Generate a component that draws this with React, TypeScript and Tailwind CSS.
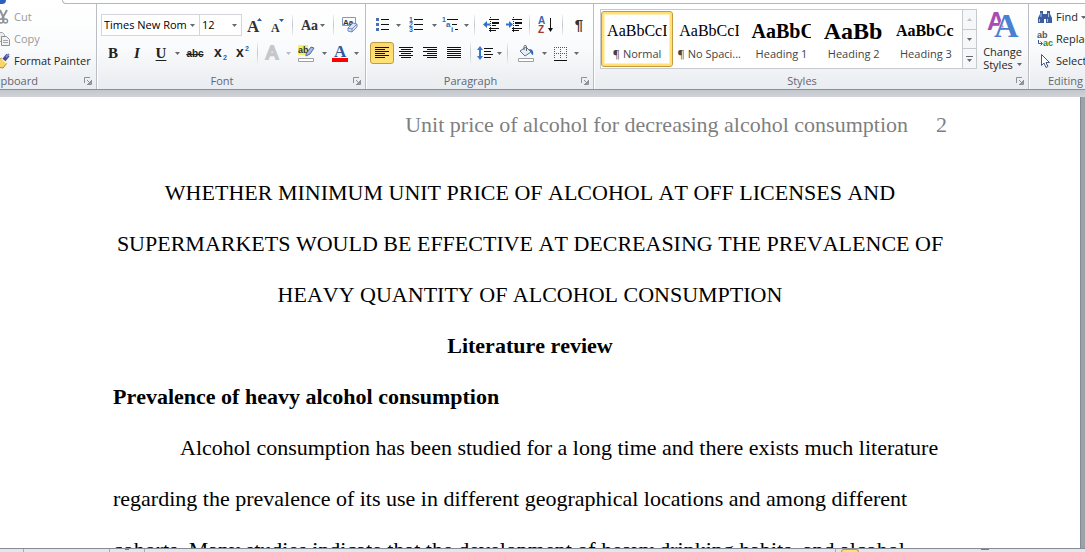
import React from 'react';
import clsx from 'clsx';

const Caret = ({ className }: { className?: string }) => (
    <svg width="5" height="3" viewBox="0 0 5 3" className={clsx('shrink-0', className ?? 'fill-[#666a70]')} aria-hidden="true">
        <path d="M0 0h5L2.5 3z" />
    </svg>
);

const Sep = () => <span className="mx-1 h-5 w-px shrink-0 bg-linear-to-b from-[#eceef1] via-[#c3c7cd] to-[#eceef1]" />;

interface ToolProps {
    label: string;
    width?: string;
    active?: boolean;
    children: React.ReactNode;
}

const Tool = ({ label, width = 'w-6', active, children }: ToolProps) => (
    <button
        aria-label={label}
        className={clsx(
            'flex h-[22px] shrink-0 items-center justify-center gap-0.5',
            width,
            active && 'rounded-[3px] border border-[#c29b3f] bg-linear-to-b from-[#fbd971] to-[#ffe375]'
        )}
    >
        {children}
    </button>
);

const Drop = ({ label, className }: { label: string; className?: string }) => (
    <button aria-label={label} className="flex h-[22px] w-2 shrink-0 items-center justify-center">
        <Caret className={className} />
    </button>
);

const Icon = ({ children }: { children: React.ReactNode }) => (
    <svg width="16" height="16" viewBox="0 0 16 16" className="shrink-0 overflow-visible" aria-hidden="true">
        {children}
    </svg>
);

interface GlyphProps {
    x: number;
    y: number;
    size: number;
    fill: string;
    serif?: boolean;
    children: string;
}

// small letter inside an icon
const Glyph = ({ x, y, size, fill, serif, children }: GlyphProps) => (
    <text
        x={x}
        y={y}
        fontSize={size}
        fontWeight="bold"
        fill={fill}
        className={serif ? "font-['Liberation_Serif',serif]" : "font-['Liberation_Sans',sans-serif]"}
    >
        {children}
    </text>
);

interface ComboProps {
    label: string;
    value: string;
    width: string;
}

const Combo = ({ label, value, width }: ComboProps) => (
    <div className={clsx('flex h-[22px] shrink-0 items-center border border-[#d3d6da] bg-white pr-1 pl-0.5', width)}>
        <select aria-label={label} className="min-w-0 flex-1 appearance-none overflow-hidden text-[11px] text-black">
            <option>{value}</option>
        </select>
        <Caret />
    </div>
);

interface GroupProps {
    name: string;
    launcher?: boolean;
    className?: string;
    labelClassName?: string;
    children: React.ReactNode;
}

const Group = ({ name, launcher = true, className, labelClassName = 'pr-1.5 text-center', children }: GroupProps) => (
    <section aria-label={name} className={clsx('flex flex-col border-r border-[#babdc3] shadow-[1px_0_0_white]', className)}>
        <div className="flex-1">{children}</div>
        <div className="flex h-4 items-center text-[11px] text-[#5f6775]">
            <span className={clsx('flex-1 whitespace-nowrap', labelClassName)}>{name}</span>
            {launcher && (
                <button aria-label={`${name} options`} className="mr-1">
                    <svg width="8" height="8" viewBox="0 0 8 8" fill="none" stroke="#8d9197" aria-hidden="true">
                        <path d="M.5 6V.5H6M3 3l3 3M7.5 3v4.5H3M6.5 4v2.500H4" />
                    </svg>
                </button>
            )}
        </div>
    </section>
);

const alignments = [
    { label: 'Align left', d: 'M1 2.500h14M1 4.500h10M1 6.500h14M1 8.500h10M1 10.500h14M1 12.500h10' },
    { label: 'Center', d: 'M1 2.500h14M3 4.500h10M1 6.500h14M3 8.500h10M1 10.500h14M3 12.500h10' },
    { label: 'Align right', d: 'M1 2.500h14M5 4.500h10M1 6.500h14M5 8.500h10M1 10.500h14M5 12.500h10' },
    { label: 'Justify', d: 'M1 2.500h14M1 4.500h14M1 6.500h14M1 8.500h14M1 10.500h14M1 12.500h14' },
];

const styles = [
    { name: '¶ Normal', sample: 'AaBbCcI', look: 'text-[16px]', active: true },
    { name: '¶ No Spaci...', sample: 'AaBbCcI', look: 'text-[16px]' },
    { name: 'Heading 1', sample: 'AaBbC', look: 'text-[20px] font-bold' },
    { name: 'Heading 2', sample: 'AaBb', look: 'text-[24px] font-bold' },
    { name: 'Heading 3', sample: 'AaBbCc', look: 'text-[16px] font-bold' },
];

const ClipboardGroup = () => (
    <Group name="Clipboard" className="w-[97px] shrink-0 overflow-hidden" labelClassName="-ml-3">
        <div className="-ml-1.5 pt-0.5 text-[11px] [&>button]:flex [&>button]:h-[22px] [&>button]:items-center [&>button]:gap-1 [&>button]:whitespace-nowrap">
            <button className="text-[#9a9a9a]">
                <Icon>
                    <path d="M6 1l4 9M13 1L8 10" stroke="#8f9399" strokeWidth="2" />
                    <circle cx="7" cy="12" r="2" fill="none" stroke="#8f9399" strokeWidth="1.500" />
                    <circle cx="11.500" cy="12" r="2" fill="none" stroke="#8f9399" strokeWidth="1.500" />
                </Icon>
                Cut
            </button>
            <button className="text-[#9a9a9a]">
                <Icon>
                    <path d="M2.500 1.500h6l2 2v7h-8z" fill="#ececec" stroke="#a4a6a9" />
                    <path d="M7.500 5.500h5l3 3v6h-8z" fill="#f2f2f2" stroke="#8c8f93" />
                    <path d="M9 9.500h5M9 11.500h5" stroke="#a4a6a9" />
                </Icon>
                Copy
            </button>
            <button className="text-[#262626]">
                <Icon>
                    <path d="M4 7l4-2 5 5-4 5-6-1z" fill="#f6d56b" stroke="#b58b2c" />
                    <path d="M8 5l5 5" stroke="#f9f2d8" strokeWidth="2" />
                    <path d="M10 7l4-5" stroke="#424d99" strokeWidth="4" />
                    <path d="M12 4l3-3" stroke="#7d86c2" strokeWidth="2" />
                </Icon>
                Format Painter
            </button>
        </div>
    </Group>
);

const FontGroup = () => (
    <Group name="Font" className="w-[269px] shrink-0">
        <div className="flex flex-col gap-1.5 pt-2.5 pl-1">
            <div className="flex items-center">
                <Combo label="Font" value="Times New Rom" width="w-[99px]" />
                <Combo label="Font size" value="12" width="w-[43px] -ml-px" />
                <Tool label="Grow font" width="w-[26px]">
                    <Icon>
                        <Glyph x={0} y={15} size={17} fill="#333" serif>A</Glyph>
                        <path d="M10 4h5l-2.500-3z" fill="#2c5aa8" />
                    </Icon>
                </Tool>
                <Tool label="Shrink font" width="w-5">
                    <Icon>
                        <Glyph x={1} y={15} size={12} fill="#333" serif>A</Glyph>
                        <path d="M9 2h5l-2.500 3z" fill="#2c5aa8" />
                    </Icon>
                </Tool>
                <Sep />
                <Tool label="Change case" width="w-8">
                    <span className="font-['Liberation_Serif',serif] text-[14px] font-bold text-[#333]">Aa</span>
                    <Caret />
                </Tool>
                <Sep />
                <Tool label="Clear formatting">
                    <Icon>
                        <path d="M.5 .5h13v8H.5z" fill="#f7faff" stroke="#7d9ac4" />
                        <Glyph x={1} y={7.5} size={8} fill="#333">Aa</Glyph>
                        <path d="M6 11l5-5 4 1v3l-5 5-4-1z" fill="#dbe5fa" stroke="#7088bd" />
                        <path d="M6 11l4 1 5-5M10 12v3" fill="none" stroke="#7088bd" />
                    </Icon>
                </Tool>
            </div>
            <div className="flex items-center font-['Liberation_Serif',serif] text-[15px] text-[#222]">
                <Tool label="Bold"><b>B</b></Tool>
                <Tool label="Italic"><b className="italic">I</b></Tool>
                <Tool label="Underline"><b className="underline underline-offset-2">U</b></Tool>
                <Drop label="Underline style" />
                <Tool label="Strikethrough" width="w-7">
                    <span className="font-['Liberation_Sans',sans-serif] text-[10px] font-bold line-through">abc</span>
                </Tool>
                <Tool label="Subscript">
                    <Icon>
                        <Glyph x={1} y={12} size={14} fill="#222">x</Glyph>
                        <Glyph x={10} y={15} size={7} fill="#2c5aa8">2</Glyph>
                    </Icon>
                </Tool>
                <Tool label="Superscript" width="w-5">
                    <Icon>
                        <Glyph x={1} y={12} size={14} fill="#222">x</Glyph>
                        <Glyph x={10} y={6} size={7} fill="#2c5aa8">2</Glyph>
                    </Icon>
                </Tool>
                <Sep />
                <Tool label="Text effects" width="w-[22px]">
                    <Icon>
                        <text
                            x="1"
                            y="14"
                            fontSize="18"
                            fill="#fff"
                            stroke="#c6c7cd"
                            strokeWidth="2"
                            className="font-['Liberation_Sans',sans-serif]"
                        >
                            A
                        </text>
                    </Icon>
                </Tool>
                <Drop label="Text effect options" className="fill-[#b8babd]" />
                <Tool label="Highlight" width="w-7">
                    <Icon>
                        <path d="M0 0h10v10H0z" fill="#f3f06a" />
                        <Glyph x={0} y={8} size={9} fill="#333">ab</Glyph>
                        <path d="M8 9l5-7 3 1-4 6-4 2z" fill="#a9bde0" stroke="#526ba0" />
                        <path d="M.5 13.500h15v3H.5z" fill="#fff" stroke="#9c9fa3" />
                    </Icon>
                </Tool>
                <Drop label="Highlight color" />
                <Tool label="Font color">
                    <Icon>
                        <Glyph x={2} y={12} size={17} fill="#31599b" serif>A</Glyph>
                        <path d="M0 13h16v4H0z" fill="#f00" />
                    </Icon>
                </Tool>
                <Drop label="Font color options" />
            </div>
        </div>
    </Group>
);

const ParagraphGroup = () => (
    <Group name="Paragraph" className="w-[228px] shrink-0">
        <div className="flex flex-col gap-1.5 pt-2.5 pl-1">
            <div className="flex items-center">
                <Tool label="Bullets">
                    <Icon>
                        <path d="M2 1h3v3H2zM2 6h3v3H2zM2 11h3v3H2z" fill="#4a6fb5" />
                        <path d="M7 2.500h8M7 7.500h8M7 12.500h8" stroke="#111" />
                    </Icon>
                </Tool>
                <Drop label="Bullet library" />
                <Tool label="Numbering" width="w-7">
                    <Icon>
                        <Glyph x={1} y={5} size={7} fill="#3864b4">1</Glyph>
                        <Glyph x={1} y={10} size={7} fill="#3864b4">2</Glyph>
                        <Glyph x={1} y={15} size={7} fill="#3864b4">3</Glyph>
                        <path d="M6 2.500h9M6 7.500h9M6 12.500h9" stroke="#111" />
                    </Icon>
                </Tool>
                <Drop label="Numbering library" />
                <Tool label="Multilevel list">
                    <Icon>
                        <Glyph x={0} y={5} size={7} fill="#3864b4">1</Glyph>
                        <Glyph x={4} y={10} size={8} fill="#3864b4">a</Glyph>
                        <Glyph x={9} y={15} size={8} fill="#3864b4">i</Glyph>
                        <path d="M5 2.500h11M10 7.500h5M13 12.500h3" stroke="#111" />
                    </Icon>
                </Tool>
                <Drop label="List library" />
                <Sep />
                <Tool label="Decrease indent">
                    <Icon>
                        <path d="M7.500 0v16" stroke="#333" strokeDasharray="1 1" />
                        <path d="M6 2.500h10M9 8.500h4M6 11.500h10M6 13.500h7" stroke="#111" />
                        <path d="M9 5h7v2H9z" fill="#111" />
                        <path d="M0 7.500L4 4v2.500h3v2H4V11z" fill="#2f6fce" />
                    </Icon>
                </Tool>
                <Tool label="Increase indent" width="w-[22px]">
                    <Icon>
                        <path d="M7.500 0v16" stroke="#333" strokeDasharray="1 1" />
                        <path d="M6 2.500h10M9 8.500h4M6 11.500h10M6 13.500h7" stroke="#111" />
                        <path d="M9 5h7v2H9z" fill="#111" />
                        <path d="M7 7.500L3 4v2.500H0v2h3V11z" fill="#2f6fce" />
                    </Icon>
                </Tool>
                <Sep />
                <Tool label="Sort">
                    <Icon>
                        <Glyph x={0} y={7} size={10} fill="#3864b4">A</Glyph>
                        <Glyph x={0} y={16} size={10} fill="#a03838">Z</Glyph>
                        <path d="M12.500 1v11" stroke="#111" />
                        <path d="M10 11h5l-2.500 4z" fill="#111" />
                    </Icon>
                </Tool>
                <Sep />
                <Tool label="Show marks">
                    <span className="font-['Liberation_Sans',sans-serif] text-[15px] font-bold text-[#333]">¶</span>
                </Tool>
            </div>
            <div className="flex items-center">
                {alignments.map((a, i) => (
                    <Tool key={a.label} label={a.label} active={i === 0}>
                        <Icon>
                            <path d={a.d} stroke="#111" />
                        </Icon>
                    </Tool>
                ))}
                <Sep />
                <Tool label="Line spacing" width="w-5">
                    <Icon>
                        <path d="M0 5l3-4 3 4H4v6h2l-3 4-3-4h2V5z" fill="#3a74cc" />
                        <path d="M7 3.500h9M7 6.500h7M7 9.500h9M7 12.500h7" stroke="#111" />
                    </Icon>
                </Tool>
                <Drop label="Line spacing options" />
                <Sep />
                <Tool label="Shading" width="w-7">
                    <Icon>
                        <path d="M2 6l6-4 5 5-6 4z" fill="#e7eefa" stroke="#5673a8" />
                        <path d="M6 5V1.500C6 0 8.500 0 8.500 1.500V6" fill="none" stroke="#666" />
                        <path d="M11 4c3 0 5 2 4 6-1 0-2-1-2-3z" fill="#2f66bd" />
                        <path d="M.5 13.500h15v3H.5z" fill="#fff" stroke="#9c9fa3" />
                    </Icon>
                </Tool>
                <Drop label="Shading color" />
                <Tool label="Borders">
                    <Icon>
                        <path d="M2 2.500h12M2 8.500h12M2.500 2v12M8.500 2v12M14.500 2v12" stroke="#555" strokeDasharray="1 1" />
                        <path d="M2 15.500h13" stroke="#111" />
                    </Icon>
                </Tool>
                <Drop label="Border options" />
            </div>
        </div>
    </Group>
);

const StylesGroup = () => (
    <Group name="Styles" className="min-w-[435px] flex-1">
        <div className="flex pt-[5px] pl-1.5">
            <div className="flex h-[60px] min-w-0 flex-1 border border-[#c6c9ce] bg-white">
                <div className="grid min-w-0 flex-1 grid-cols-5 py-px">
                    {styles.map((s) => (
                        <button
                            key={s.name}
                            className={clsx(
                                'flex min-w-0 flex-col items-center overflow-hidden border',
                                s.active
                                    ? 'rounded-[3px] border-[#c29b3f] shadow-[inset_0_0_0_2px_#ffdf76,inset_0_0_0_3px_#fff0b8]'
                                    : 'border-transparent'
                            )}
                        >
                            <span className={clsx("flex h-[34px] w-[60px] items-center justify-start overflow-hidden pt-1 font-['Liberation_Serif',serif] text-black", s.look)}>
                                {s.sample}
                            </span>
                            <span className="text-[11px] leading-4 whitespace-nowrap text-[#444]">{s.name}</span>
                        </button>
                    ))}
                </div>
                <div className="flex w-3.5 flex-col divide-y divide-[#c6c9ce] border-l border-[#c6c9ce] bg-[#f6f7f9] [&>button]:flex [&>button]:flex-1 [&>button]:flex-col [&>button]:items-center [&>button]:justify-center [&>button]:gap-0.5">
                    <button aria-label="Previous styles"><Caret className="rotate-180 fill-[#bfc2c6]" /></button>
                    <button aria-label="Next styles"><Caret /></button>
                    <button aria-label="More styles">
                        <span className="h-px w-[7px] bg-[#666a70]" />
                        <Caret />
                    </button>
                </div>
            </div>
            <button className="flex w-[51px] shrink-0 flex-col items-center text-[11px] leading-[13px] text-[#262626]">
                <svg width="32" height="32" viewBox="0 0 32 32" className="mb-1 overflow-visible" aria-hidden="true">
                    <Glyph x={0} y={21} size={25} fill="#a94bb5">A</Glyph>
                    <text
                        x="7"
                        y="28"
                        fontSize="34"
                        fontWeight="bold"
                        fill="#4a80d0"
                        stroke="#fff"
                        strokeWidth="1"
                        paintOrder="stroke"
                        className="font-['Liberation_Serif',serif]"
                    >
                        A
                    </text>
                </svg>
                <span>Change</span>
                <span className="flex items-center gap-1">Styles <Caret /></span>
            </button>
        </div>
    </Group>
);

const EditingGroup = () => (
    <Group name="Editing" launcher={false} className="w-[74px] shrink-0" labelClassName="text-center">
        <div className="pt-0.5 pl-2 text-[11px] text-[#262626] [&>button]:flex [&>button]:h-[22px] [&>button]:items-center [&>button]:gap-[3px] [&>button]:whitespace-nowrap">
            <button>
                <Icon>
                    <path d="M3 2h3v3h4V2h3v3l2 4v5h-6v-4H7v4H1V9l2-4z" fill="#3b5f9e" />
                    <path d="M4 4v4M11.500 4v4M2.500 10v3M10.500 10v3" stroke="#a9c0e6" />
                </Icon>
                Find
                <Caret />
            </button>
            <button>
                <Icon>
                    <Glyph x={0} y={7} size={9} fill="#555">ab</Glyph>
                    <Glyph x={6} y={15} size={9} fill="#2d8a2d">ac</Glyph>
                    <path d="M1.500 9v3.500H5M3.500 10.500l2 2-2 2" fill="none" stroke="#31599b" />
                </Icon>
                Replace
            </button>
            <button>
                <Icon>
                    <path d="M4.500 1.500v11l2.500-2.500 2 4.500 2-1-2-4h3.500z" fill="#fff" stroke="#41598c" />
                </Icon>
                Select
                <Caret />
            </button>
        </div>
    </Group>
);

const Ribbon = () => (
    <header className="shrink-0 overflow-hidden">
        <div className="flex h-1 bg-white">
            <div className="w-1.5 rounded-br-sm bg-[#2a62bd]" />
            <div className="w-14" />
            <div className="flex-1 rounded-bl-sm border-b border-l border-[#b4b7bc]" />
        </div>
        <div className="flex h-[86px] border-b border-[#8b8f96] bg-linear-to-b from-white via-[#fafbfc] to-[#e9ecf0]">
            <ClipboardGroup />
            <FontGroup />
            <ParagraphGroup />
            <StylesGroup />
            <div className="flex w-14 shrink-0 overflow-hidden">
                <EditingGroup />
            </div>
        </div>
        <div className="h-[7px] bg-linear-to-b from-[#c3c6cb] to-[#d0d3d8]" />
    </header>
);

const DocumentPage = () => (
    <main className="flex min-h-0 flex-1 overflow-hidden bg-[#9da1a8]">
        <article className="mr-1 flex-1 border-r border-[#858a92] bg-white pt-0.5 pr-[133px] pl-[113px] font-['Liberation_Serif',serif] text-[22px] leading-[51px] whitespace-nowrap text-black [font-kerning:none]">
            <div className="mb-[17px] flex justify-end gap-7 text-[#7f7f7f]">
                <span>Unit price of alcohol for decreasing alcohol consumption</span>
                <span>2</span>
            </div>
            <h1 className="text-center">
                WHETHER MINIMUM UNIT PRICE OF ALCOHOL AT OFF LICENSES AND
                <br />
                SUPERMARKETS WOULD BE EFFECTIVE AT DECREASING THE PREVALENCE OF
                <br />
                HEAVY QUANTITY OF ALCOHOL CONSUMPTION
            </h1>
            <h2 className="text-center font-bold">Literature review</h2>
            <h3 className="font-bold">Prevalence of heavy alcohol consumption</h3>
            <p className="indent-[67px]">
                Alcohol consumption has been studied for a long time and there exists much literature
                <br />
                regarding the prevalence of its use in different geographical locations and among different
                <br />
                cohorts. Many studies indicate that the development of heavy drinking habits, and alcohol
            </p>
        </article>
    </main>
);

const StatusBar = () => (
    <footer className="flex h-1 shrink-0 border-t border-[#858c96] bg-[#e3e7ec]">
        <div className="w-6 border-r border-[#a9adb3]" />
        <div className="w-[86px] border-r border-[#a9adb3]" />
        <div className="flex w-[35px] justify-center border-r border-[#a9adb3]">
            <span className="h-px w-1 bg-[#e0574a]" />
        </div>
        <div className="flex-1 border-r border-[#a9adb3]" />
        <div className="flex w-[249px] gap-[122px] pl-[5px]">
            <span className="w-[18px] rounded-t-sm border border-b-0 border-[#c29b3f] bg-[#ffdf76]" />
            <span className="h-px w-2 bg-[#777b82]" />
        </div>
    </footer>
);

export default function App() {
    return (
        <div className="flex h-screen flex-col overflow-hidden bg-white font-['Open_Sans','Noto_Sans',sans-serif]">
            <Ribbon />
            <DocumentPage />
            <StatusBar />
        </div>
    );
}
